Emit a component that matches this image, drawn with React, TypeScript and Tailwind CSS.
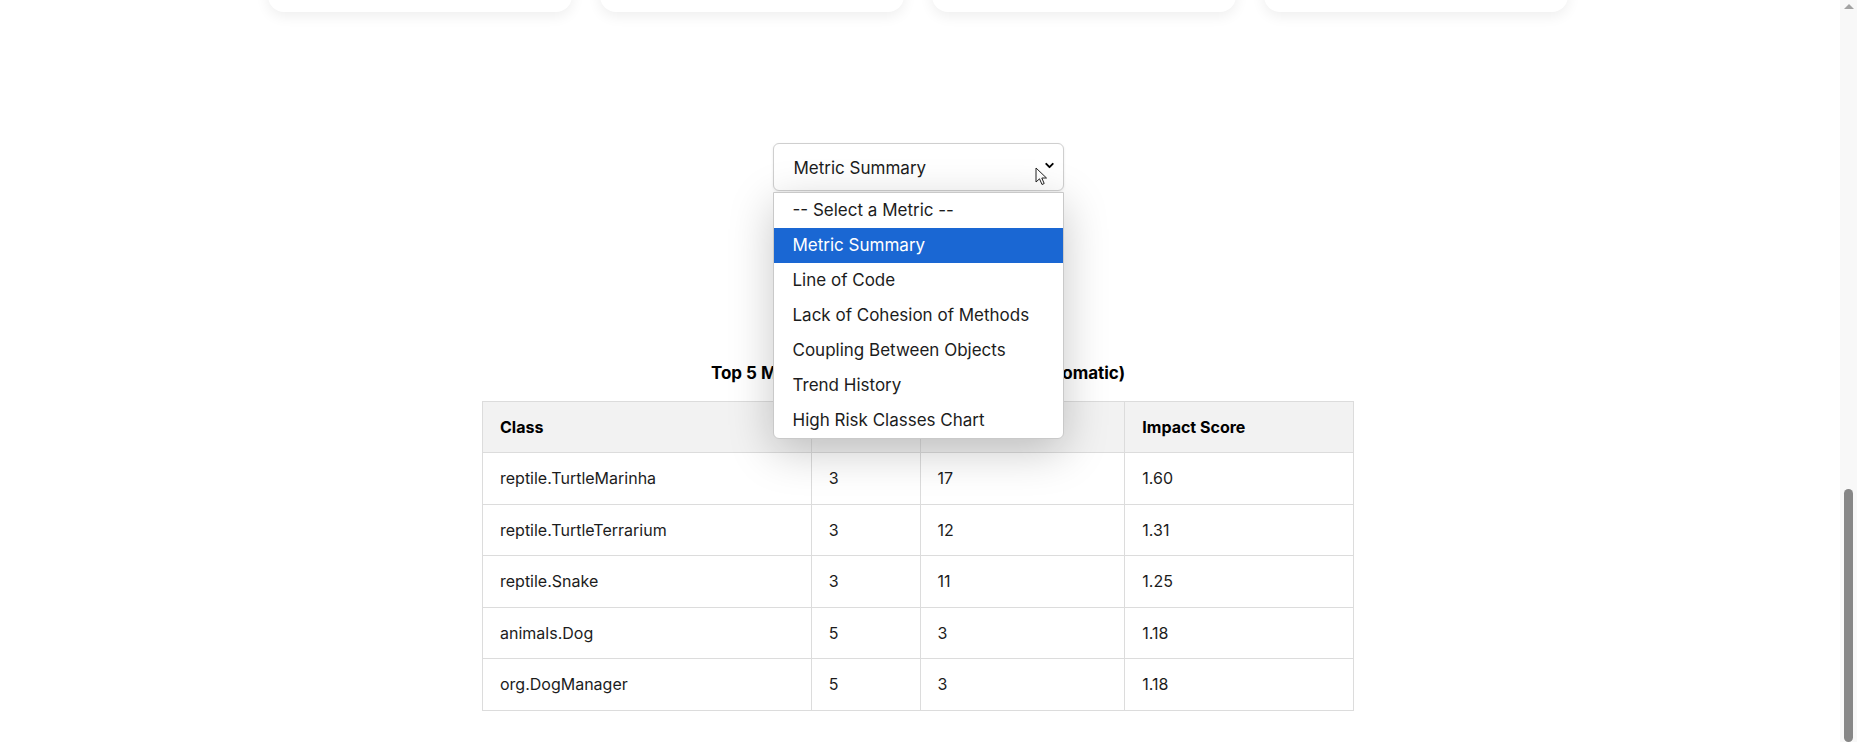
import { ChevronDown } from 'lucide-react';

const CARDS = [0, 1, 2, 3];

const OPTIONS = [
  '-- Select a Metric --',
  'Metric Summary',
  'Line of Code',
  'Lack of Cohesion of Methods',
  'Coupling Between Objects',
  'Trend History',
  'High Risk Classes Chart',
];

const ROWS = [
  ['reptile.TurtleMarinha', '3', '17', '1.60'],
  ['reptile.TurtleTerrarium', '3', '12', '1.31'],
  ['reptile.Snake', '3', '11', '1.25'],
  ['animals.Dog', '5', '3', '1.18'],
  ['org.DogManager', '5', '3', '1.18'],
];

function Cursor() {
  return (
    <svg viewBox="0 0 13 20" className="absolute left-[262px] top-[24px] h-[20px] w-[13px]" aria-hidden="true">
      <path
        d="M1 1 L1 15 L4.5 11.8 L7 17.5 L9.2 16.5 L6.8 11 L11.5 11 Z"
        fill="#fff"
        stroke="#222"
        strokeWidth="1"
        strokeLinejoin="round"
      />
    </svg>
  );
}

export default function App() {
  return (
    <div className="flex h-[742px] w-full overflow-hidden bg-white font-['Inter','Noto_Sans',sans-serif] text-[#1c1c1c]">
      <main className="flex flex-1 flex-col items-center pr-1">
        {/* stat cards, scrolled mostly out of view */}
        <div className="-mt-[130px] flex gap-[28px]">
          {CARDS.map((c) => (
            <div key={c} className="h-[142px] w-[304px] rounded-2xl bg-white shadow-[0_4px_14px_rgba(0,0,0,0.07)]" />
          ))}
        </div>

        <div className="relative mt-[131px] w-[291px]">
          <div className="flex h-[48px] items-center justify-between rounded-md border border-[#cfcfcf] bg-white pl-[20px] pr-[7px] pt-[3px] text-[17px] shadow-[0_1px_3px_rgba(0,0,0,0.08)]">
            <span>Metric Summary</span>
            <ChevronDown className="-mt-[6px] h-[13px] w-[13px] text-black" strokeWidth={3.5} />
          </div>
          <Cursor />

          <ul className="absolute left-0 top-[49px] z-10 w-[291px] overflow-hidden rounded-b-md border border-[#c9c9c9] bg-white text-[17px] shadow-[0_12px_45px_rgba(0,0,0,0.22)]">
            {OPTIONS.map((o, i) => (
              <li
                key={o}
                className={
                  i === 1
                    ? 'flex h-[35px] items-center bg-[#1a67d3] px-[19px] pt-[1px] text-white'
                    : 'flex h-[35px] items-center px-[19px] pt-[1px] text-[#1c1c1c]'
                }
              >
                {o}
              </li>
            ))}
          </ul>
        </div>

        <h3 className="mt-[170px] text-[17px] font-bold leading-6 text-black">
          Top 5 Most Critical Classes by Impact (Automatic)
        </h3>

        <table className="mt-[16px] w-[872px] border-collapse text-left text-[16px]">
          <thead>
            <tr className="bg-[#f2f2f2]">
              <th className="h-[51px] w-[329px] border border-[#dcdcdc] px-[17px] font-bold text-black">Class</th>
              <th className="w-[109px] border border-[#dcdcdc] px-[17px] font-bold text-black">CBO</th>
              <th className="w-[205px] border border-[#dcdcdc] px-[17px] font-bold text-black">LCOM</th>
              <th className="w-[229px] border border-[#dcdcdc] px-[17px] font-bold text-black">Impact Score</th>
            </tr>
          </thead>
          <tbody>
            {ROWS.map((r) => (
              <tr key={r[0]}>
                {r.map((cell, j) => (
                  <td key={j} className="h-[51.5px] border border-[#dcdcdc] px-[17px] font-normal">
                    {cell}
                  </td>
                ))}
              </tr>
            ))}
          </tbody>
        </table>
      </main>

      {/* browser scrollbar */}
      <div className="flex w-[17px] flex-col items-center bg-[#f8f8f8]">
        <div className="mt-[4px] h-0 w-0 border-x-[5px] border-b-[5px] border-x-transparent border-b-[#a3a3a3]" />
        <div className="mt-[480px] h-[260px] w-[9px] rounded-full bg-[#878787]" />
      </div>
    </div>
  );
}
